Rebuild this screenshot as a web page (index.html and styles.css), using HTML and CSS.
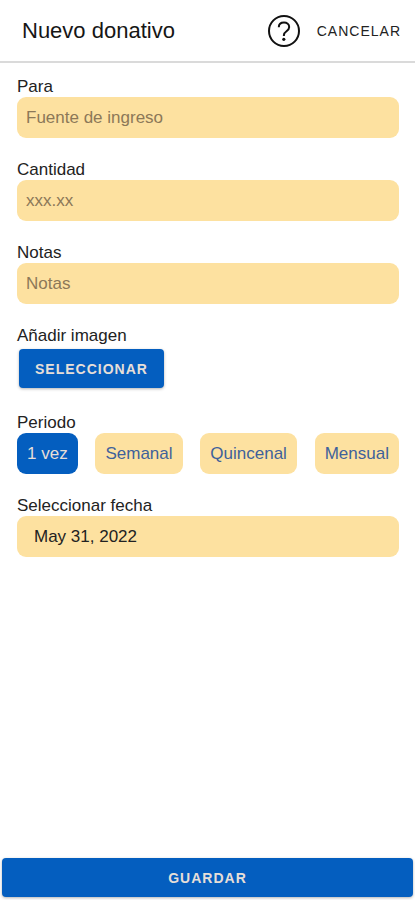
FILE: index.html
```html
<!DOCTYPE html>
<html lang="es">
<head>
<meta charset="utf-8">
<meta name="viewport" content="width=device-width, initial-scale=1">
<title>Nuevo donativo</title>
<link rel="stylesheet" href="styles.css">
</head>
<body>
<header class="toolbar">
  <h1 class="title">Nuevo donativo</h1>
  <button class="icon-button" type="button" aria-label="Ayuda">
    <svg class="help-icon" viewBox="0 0 34 34" fill="none" stroke="currentColor" aria-hidden="true">
      <circle cx="17" cy="17" r="15" stroke-width="2"/>
      <path d="M11.8 13.2c0-3 2.3-4.7 5.2-4.7s5.2 1.8 5.2 4.5c0 2.1-1.2 3.1-2.7 4.2-1.7 1.2-2.6 2.1-2.6 3.9v.8" stroke-width="2"/>
      <circle cx="16.8" cy="25.3" r="1.6" fill="currentColor" stroke="none"/>
    </svg>
  </button>
  <button class="cancel" type="button">CANCELAR</button>
</header>
<form class="form" id="donation">
  <div class="field">
    <label class="label" for="source">Para</label>
    <input class="input" id="source" type="text" placeholder="Fuente de ingreso">
  </div>
  <div class="field">
    <label class="label" for="amount">Cantidad</label>
    <input class="input" id="amount" type="text" inputmode="decimal" placeholder="xxx.xx">
  </div>
  <div class="field">
    <label class="label" for="notes">Notas</label>
    <input class="input" id="notes" type="text" placeholder="Notas">
  </div>
  <div class="field">
    <label class="label" for="image">Añadir imagen</label>
    <button class="solid select" id="image" type="button">SELECCIONAR</button>
  </div>
  <div class="field" role="group" aria-labelledby="period">
    <span class="label" id="period">Periodo</span>
    <div class="chips">
      <button class="chip active" type="button" aria-pressed="true">1 vez</button>
      <button class="chip" type="button" aria-pressed="false">Semanal</button>
      <button class="chip" type="button" aria-pressed="false">Quincenal</button>
      <button class="chip" type="button" aria-pressed="false">Mensual</button>
    </div>
  </div>
  <div class="field">
    <label class="label" for="date">Seleccionar fecha</label>
    <input class="input date" id="date" type="text" value="May 31, 2022">
  </div>
</form>
<footer class="footer">
  <button class="solid save" type="submit" form="donation">GUARDAR</button>
</footer>
</body>
</html>
```
FILE: styles.css
```css
* {
  box-sizing: border-box;
}

body {
  display: flex;
  flex-direction: column;
  min-height: 100vh;
  margin: 0;
  background: #fff;
  color: #161616;
  font: 17px/20px "Liberation Sans", Arial, sans-serif;
}

button,
input {
  margin: 0;
  border: 0;
  font: inherit;
}

button {
  cursor: pointer;
}

.toolbar {
  display: flex;
  align-items: center;
  height: 63px;
  padding: 0 14px 0 22px;
  border-bottom: 2px solid #dadada;
}

.title {
  flex: 1;
  margin: 0;
  font-size: 22px;
  font-weight: 400;
  line-height: 24px;
}

.icon-button {
  display: flex;
  padding: 0;
  background: none;
  color: #111;
}

.help-icon {
  width: 34px;
  height: 34px;
}

.cancel {
  padding: 0 0 0 16px;
  background: none;
  color: #222;
  font-size: 14px;
  letter-spacing: 1px;
}

.form {
  display: flex;
  flex: 1;
  flex-direction: column;
  gap: 22px;
  padding: 14px 16px 22px 17px;
}

.field {
  display: flex;
  flex-direction: column;
}

.label {
  color: #222;
}

.input {
  width: 100%;
  height: 41px;
  padding: 0 9px;
  border-radius: 9px;
  background: #fde1a0;
  color: #222;
}

.input::placeholder {
  color: #8c7858;
  opacity: 1;
}

.date {
  padding: 0 17px;
}

.solid {
  border-radius: 4px;
  background: #045ebf;
  color: #e6dfd8;
  font-size: 14px;
  font-weight: 700;
  letter-spacing: 1px;
  box-shadow: 0 1px 3px rgba(0, 0, 0, 0.3);
}

.select {
  align-self: flex-start;
  height: 39px;
  margin: 3px 2px;
  padding: 0 16px;
}

.chips {
  display: flex;
  flex-wrap: wrap;
  justify-content: space-between;
}

.chip {
  height: 41px;
  padding: 0 10px;
  border-radius: 9px;
  background: #fde1a0;
  color: #3f619b;
}

.active {
  background: #045ebf;
  color: #e6dfd8;
}

.footer {
  padding: 0 2px 3px;
}

.save {
  width: 100%;
  height: 39px;
}
```
